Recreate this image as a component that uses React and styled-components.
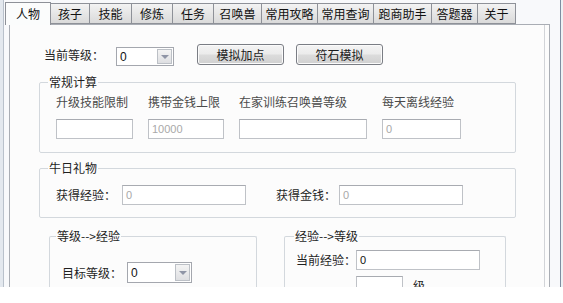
import React from "react";
import styled, { createGlobalStyle } from "styled-components";

const GlobalStyle = createGlobalStyle`
  html, body { margin: 0; padding: 0; background: #ffffff; }
  body { font-family: "Noto Sans CJK SC", "Noto Sans", sans-serif; font-size: 12px; color: #222; }
`;

const tabs = [
  { label: "人物", width: 46, active: true },
  { label: "孩子", width: 40 },
  { label: "技能", width: 43 },
  { label: "修炼", width: 42 },
  { label: "任务", width: 42 },
  { label: "召唤兽", width: 49 },
  { label: "常用攻略", width: 57 },
  { label: "常用查询", width: 57 },
  { label: "跑商助手", width: 59 },
  { label: "答题器", width: 47 },
  { label: "关于", width: 39 },
];

const calcFields = [
  { label: "升级技能限制", width: 77, value: "" },
  { label: "携带金钱上限", width: 76, value: "10000" },
  { label: "在家训练召唤兽等级", width: 128, value: "" },
  { label: "每天离线经验", width: 79, value: "0" },
];

const Window = styled.div`
  height: 287px;
  overflow: hidden;
  display: flex;
  flex-direction: column;
  background: #f8f9fb;
  border-left: 3px solid #e3e8ee;
  border-right: 2px solid #eef1f4;
  box-sizing: border-box;
`;

const Frame = styled.div`
  flex: 1;
  display: flex;
  flex-direction: column;
  border-left: 1px solid #b9c1cb;
  border-right: 1px solid #7f8da1;
  min-height: 0;
`;

const TabBar = styled.div`
  display: flex;
  margin: 3px 0 0 1px;
  height: 21px;
  position: relative;
  z-index: 1;
`;

const Tab = styled.div`
  width: ${(p) => p.$w}px;
  box-sizing: border-box;
  height: ${(p) => (p.$active ? 23 : 21)}px;
  margin-top: ${(p) => (p.$active ? -1 : 0)}px;
  border: 1px solid #8e9198;
  border-bottom: ${(p) => (p.$active ? "none" : "1px solid #8e9198")};
  margin-left: -1px;
  background: ${(p) =>
    p.$active ? "#fbfcfc" : "linear-gradient(#f3f3f3, #e6e6e6 50%, #dadada)"};
  display: flex;
  align-items: center;
  justify-content: center;
  font-size: 12px;
  line-height: 14px;
  color: #111;
  &:first-child { margin-left: 0; }
`;

const Panel = styled.div`
  flex: 1;
  margin: 0 10px 0 5px;
  border: 1px solid #a9adb4;
  border-bottom: none;
  background: #fcfcfc;
  display: flex;
  min-height: 0;
`;

const Page = styled.div`
  flex: 1;
  margin-right: 4px;
  border-right: 1px solid #d2d4d8;
  display: flex;
  flex-direction: column;
`;

const TopRow = styled.div`
  display: flex;
  align-items: center;
  margin: 19px 0 0 34px;
  height: 22px;
`;

const Label = styled.span`
  font-size: 12px;
  line-height: 14px;
  color: ${(p) => (p.$muted ? "#4a4a4a" : "#1f1f1f")};
  white-space: nowrap;
  margin-right: ${(p) => p.$gap || 0}px;
  visibility: ${(p) => (p.$ghost ? "hidden" : "visible")};
`;

const Combo = styled.div`
  width: ${(p) => p.$w}px;
  height: ${(p) => p.$h || 19}px;
  box-sizing: border-box;
  border: 1px solid #a4a7ae;
  background: #fff;
  display: flex;
  align-items: center;
  margin-right: ${(p) => p.$mr || 0}px;
  margin-top: ${(p) => p.$mt || 0}px;
  padding-left: 3px;
  font-size: 12px;
  color: #111;
`;

const ComboText = styled.span`
  flex: 1;
  font-family: "Liberation Sans", Arial, sans-serif;
`;

const Arrow = styled.div`
  width: 15px;
  height: calc(100% - 2px);
  margin-right: 1px;
  box-sizing: border-box;
  border: 1px solid #bcc0c6;
  background: linear-gradient(#f4f4f4, #dedfe2);
  display: flex;
  align-items: center;
  justify-content: center;
  &::after {
    content: "";
    border-left: 4px solid transparent;
    border-right: 4px solid transparent;
    border-top: 4px solid #8f95a6;
  }
`;

const Button = styled.div`
  width: ${(p) => p.$w}px;
  height: 21px;
  box-sizing: border-box;
  border: 1px solid #7a7d84;
  border-radius: 3px;
  background: linear-gradient(#f4f4f4, #ebebeb 48%, #dcdcdc 52%, #d0d0d0);
  box-shadow: inset 0 0 0 1px #fbfbfb;
  display: flex;
  align-items: center;
  justify-content: center;
  font-size: 12px;
  color: #1a1a1a;
  margin-right: ${(p) => p.$mr || 0}px;
  margin-top: -2px;
`;

const Group = styled.fieldset`
  margin: ${(p) => p.$m};
  width: ${(p) => p.$w}px;
  box-sizing: border-box;
  border: 1px solid #d3d8dd;
  border-radius: 2px;
  padding: ${(p) => p.$pad};
  min-width: 0;
  ${(p) => (p.$open ? "border-bottom: none;" : "")}
`;

const Legend = styled.legend`
  font-size: 12px;
  line-height: 14px;
  padding: 0 1px;
  margin-left: ${(p) => p.$ml}px;
  color: #1f1f1f;
`;

const FieldRow = styled.div`
  display: flex;
  gap: 15px;
`;

const Field = styled.div`
  width: ${(p) => p.$w}px;
  display: flex;
  flex-direction: column;
  gap: 10px;
`;

const Input = styled.div`
  width: ${(p) => (p.$fill ? "100%" : `${p.$w}px`)};
  height: 20px;
  box-sizing: border-box;
  border: 1px solid #bfc2c7;
  border-top-color: #a8abb1;
  background: #fff;
  display: flex;
  align-items: center;
  padding-left: 3px;
  font-family: "Liberation Sans", Arial, sans-serif;
  font-size: 11px;
  color: ${(p) => (p.$disabled ? "#a9a9a9" : "#111")};
  margin-right: ${(p) => p.$mr || 0}px;
`;

const Line = styled.div`
  display: flex;
  align-items: center;
  margin-top: ${(p) => p.$mt || 0}px;
`;

const Columns = styled.div`
  display: flex;
  align-items: flex-start;
  margin: 11px 0 0 39px;
  gap: 27px;
`;

export default function App() {
  return (
    <>
      <GlobalStyle />
      <Window>
        <Frame>
          <TabBar>
            {tabs.map((t) => (
              <Tab key={t.label} $w={t.width} $active={t.active}>
                {t.label}
              </Tab>
            ))}
          </TabBar>
          <Panel>
            <Page>
              <TopRow>
                <Label $gap={12}>当前等级：</Label>
                <Combo $w={58} $mr={23} $mt={3}>
                  <ComboText>0</ComboText>
                  <Arrow />
                </Combo>
                <Button $w={87} $mr={12}>模拟加点</Button>
                <Button $w={87}>符石模拟</Button>
              </TopRow>

              <Group $m="9px 0 0 29px" $w={477} $pad="6px 0 13px 16px">
                <Legend $ml={-8}>常规计算</Legend>
                <FieldRow>
                  {calcFields.map((f) => (
                    <Field key={f.label} $w={f.width}>
                      <Label $muted>{f.label}</Label>
                      <Input $fill $disabled>{f.value}</Input>
                    </Field>
                  ))}
                </FieldRow>
              </Group>

              <Group $m="8px 0 0 29px" $w={477} $pad="10px 0 12px 16px">
                <Legend $ml={-8}>牛日礼物</Legend>
                <Line>
                  <Label $gap={6}>获得经验：</Label>
                  <Input $w={124} $mr={30} $disabled>0</Input>
                  <Label $gap={3}>获得金钱：</Label>
                  <Input $w={124} $disabled>0</Input>
                </Line>
              </Group>

              <Columns>
                <Group $m="0" $w={208} $pad="19px 0 20px 12px" $open>
                  <Legend $ml={-6}>等级--&gt;经验</Legend>
                  <Line>
                    <Label $gap={5}>目标等级：</Label>
                    <Combo $w={65} $h={21}>
                      <ComboText>0</ComboText>
                      <Arrow />
                    </Combo>
                  </Line>
                </Group>
                <Group $m="0" $w={222} $pad="7px 0 20px 11px" $open>
                  <Legend $ml={-2}>经验--&gt;等级</Legend>
                  <Line>
                    <Label>当前经验：</Label>
                    <Input $w={124}>0</Input>
                  </Line>
                  <Line $mt={6}>
                    <Label $ghost>当前等级：</Label>
                    <Input $w={47} $mr={10} />
                    <Label>级</Label>
                  </Line>
                </Group>
              </Columns>
            </Page>
          </Panel>
        </Frame>
      </Window>
    </>
  );
}
